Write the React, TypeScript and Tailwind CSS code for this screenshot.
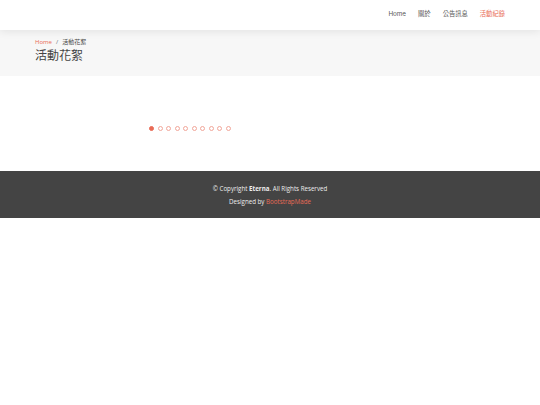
import React from "react";

const navItems = ["Home", "關於", "公告訊息", "活動紀錄"];

const App: React.FC = () => {
    return (
        <div className="w-[540px] min-h-[405px] bg-white font-['Open_Sans','Noto_Sans_CJK_TC',sans-serif] text-[#444]">
            {/* Header */}
            <header className="relative z-10 h-[30px] bg-white shadow-[0_2px_8px_rgba(0,0,0,0.08)] flex items-center justify-end pr-[35px]">
                <nav className="flex items-center gap-[12px] text-[6.3px] font-['Inter','Noto_Sans_CJK_TC',sans-serif]">
                    {navItems.map((item, i) => (
                        <span
                            key={item}
                            className={i === navItems.length - 1 ? "text-[#e96b56]" : "text-[#555]"}
                        >
                            {item}
                        </span>
                    ))}
                </nav>
            </header>

            {/* Breadcrumbs */}
            <section className="h-[46px] bg-[#f7f7f7] px-[35px] pt-[8px]">
                <div className="flex items-center gap-[4px] text-[6px] leading-[9px]">
                    <span className="text-[#e96b56]">Home</span>
                    <span className="text-[#6c757d]">/</span>
                    <span className="text-[#444]">活動花絮</span>
                </div>
                <h2 className="mt-[1px] text-[12px] leading-[16px] text-[#444]">活動花絮</h2>
            </section>

            {/* Gallery pagination */}
            <section className="h-[95px] flex items-center pl-[149px] pt-[9px]">
                <div className="flex items-center gap-[3.5px]">
                    {Array.from({ length: 10 }).map((_, i) => (
                        <span
                            key={i}
                            className={
                                i === 0
                                    ? "w-[5px] h-[5px] rounded-full bg-[#e96b56] border border-[#e96b56]"
                                    : "w-[5px] h-[5px] rounded-full bg-white border border-[#e96b56] opacity-60"
                            }
                        />
                    ))}
                </div>
            </section>

            {/* Footer */}
            <footer className="h-[47px] bg-[#444444] flex flex-col items-center justify-center gap-[4px] text-[6.2px] leading-[9px] text-[#eee]">
                <div>
                    © Copyright <strong className="font-bold">Eterna</strong>. All Rights Reserved
                </div>
                <div>
                    Designed by <span className="text-[#e96b56]">BootstrapMade</span>
                </div>
            </footer>
        </div>
    );
};

export default App;
